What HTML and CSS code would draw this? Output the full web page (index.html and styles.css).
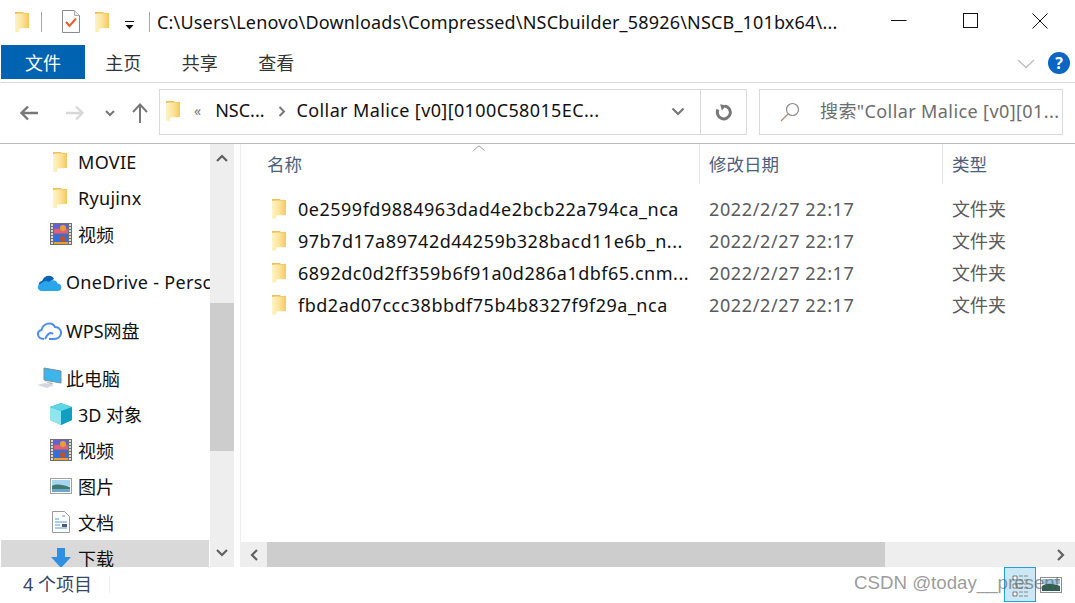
FILE: index.html
```html
<!DOCTYPE html>
<html lang="zh-CN">
<head>
<meta charset="utf-8">
<title>Explorer</title>
<link rel="stylesheet" href="styles.css">
</head>
<body>
<svg class="defs" width="0" height="0">
  <defs>
    <linearGradient id="fg" x1="0" x2="1" y1="0" y2="0"><stop offset="0" stop-color="#fff3c4"/><stop offset=".55" stop-color="#fbe29a"/><stop offset="1" stop-color="#f2c95e"/></linearGradient>
    <symbol id="folder" viewBox="0 0 14 20">
      <path d="M0 0h8l1 1h5v15H0z" fill="#eec25a"/>
      <path d="M0 2L4 1.500h10V16L4 16.500V20L.8 20 0 19z" fill="url(#fg)"/>
    </symbol>
    <symbol id="film" viewBox="0 0 22 22">
      <rect width="22" height="22" fill="#6e6e6e"/>
      <rect x="4" y="1" width="14" height="9.500" fill="#6a5fd0"/><rect x="4" y="6" width="14" height="4.500" fill="#e0607a"/><circle cx="13" cy="5" r="3" fill="#e8a030"/>
      <rect x="4" y="11.500" width="14" height="9.500" fill="#2f6fe0"/><circle cx="13" cy="16" r="3" fill="#c05030"/><rect x="4" y="19" width="14" height="2" fill="#e8a030"/>
      <path d="M1 2h2M1 5h2M1 8h2M1 11h2M1 14h2M1 17h2M1 20h2M19 2h2M19 5h2M19 8h2M19 11h2M19 14h2M19 17h2M19 20h2" stroke="#fff" stroke-width="1.500"/>
    </symbol>
  </defs>
</svg>
<div class="window">
  <header class="titlebar">
    <svg class="ico t-folder1" width="14" height="20"><use href="#folder"/></svg>
    <span class="t-sep t-sep1"></span>
    <svg class="t-doc" width="18" height="23" viewBox="0 0 18 23"><path d="M.5.500h12l5 5v17H.5z" fill="#fff" stroke="#8a8a8a"/><path d="M12.500.500v5h5" fill="#eee" stroke="#aaa"/><path d="M4 12l3.500 4L14 8.500" fill="none" stroke="#e8622c" stroke-width="2"/></svg>
    <svg class="ico t-folder2" width="14" height="20"><use href="#folder"/></svg>
    <svg class="t-drop" width="9" height="10" viewBox="0 0 9 10"><path d="M0 .500h9" stroke="#111" stroke-width="1"/><path d="M.500 4h8L4.500 8.500z" fill="#111"/></svg>
    <span class="t-sep t-sep2"></span>
    <span class="t-path">C:\Users\Lenovo\Downloads\Compressed\NSCbuilder_58926\NSCB_101bx64\...</span>
    <div class="winctl">
      <svg width="16" height="16" viewBox="0 0 16 16"><path d="M0 7.500h15.500" stroke="#111"/></svg>
      <svg width="16" height="16" viewBox="0 0 16 16"><rect x="1.500" y=".5" width="14" height="14" fill="none" stroke="#111"/></svg>
      <svg width="16" height="16" viewBox="0 0 16 16"><path d="M.500 .500l15 15M15.500 .500l-15 15" stroke="#111" fill="none"/></svg>
    </div>
  </header>

  <nav class="ribbon">
    <span class="tab tab-active">文件</span>
    <span class="tab">主页</span>
    <span class="tab">共享</span>
    <span class="tab">查看</span>
    <svg class="r-chev" width="18" height="10" viewBox="0 0 18 10"><path d="M1 1l8 7.500L17 1" fill="none" stroke="#bdbdbd" stroke-width="1.300"/></svg>
    <span class="help">?</span>
  </nav>

  <div class="addr">
    <svg class="a-back" width="20" height="16" viewBox="0 0 20 16"><path d="M19 8H3M9 1.500L2.500 8 9 14.500" fill="none" stroke="#777" stroke-width="2.400"/></svg>
    <svg class="a-fwd" width="20" height="16" viewBox="0 0 20 16"><path d="M1 8h16M11 1.500L17.500 8 11 14.500" fill="none" stroke="#d8d8d8" stroke-width="2.400"/></svg>
    <svg class="a-down" width="10" height="7" viewBox="0 0 10 7"><path d="M1 1l4 4 4-4" fill="none" stroke="#777" stroke-width="2"/></svg>
    <svg class="a-up" width="16" height="20" viewBox="0 0 16 20"><path d="M8 20V2M1 9l7-7.500L15 9" fill="none" stroke="#777" stroke-width="2"/></svg>
    <div class="crumb">
      <svg class="c-folder" width="14" height="20"><use href="#folder"/></svg>
      <span class="c-dbl">«</span>
      <span class="c-a">NSC...</span>
      <svg class="c-arrow" width="8" height="11" viewBox="0 0 8 11"><path d="M1.500 1l4.500 4.500L1.500 10" fill="none" stroke="#777" stroke-width="2"/></svg>
      <span class="c-b">Collar Malice [v0][0100C58015EC...</span>
      <svg class="c-drop" width="14" height="9" viewBox="0 0 14 9"><path d="M1.500 1.500L7 7l5.500-5.500" fill="none" stroke="#777" stroke-width="2.200"/></svg>
      <span class="c-refresh">
        <svg width="18" height="18" viewBox="0 0 18 18"><path d="M10 3A6.500 6.500 0 1 1 3 6.500" fill="none" stroke="#777" stroke-width="3"/><path d="M6 .500v6.500l5.500-3.500z" fill="#777" transform="rotate(-15 8 4)"/></svg>
      </span>
    </div>
    <div class="search">
      <svg class="s-ico" width="20" height="20" viewBox="0 0 20 20"><circle cx="12.500" cy="7.500" r="6" fill="none" stroke="#8a8a8a" stroke-width="1.200"/><path d="M8 12l-7 7" stroke="#b08a6a" stroke-width="1.300"/></svg>
      <span class="s-text">搜索"Collar Malice [v0][01...</span>
    </div>
  </div>

  <main class="main">
    <aside class="side">
      <ul class="tree">
        <li class="row lv2"><svg class="ti-f" width="14" height="20"><use href="#folder"/></svg><span class="lat">MOVIE</span></li>
        <li class="row lv2"><svg class="ti-f" width="14" height="20"><use href="#folder"/></svg><span class="lat">Ryujinx</span></li>
        <li class="row lv2"><svg class="ti" width="22" height="22"><use href="#film"/></svg><span class="cj">视频</span></li>
        <li class="row lv1 gap"><svg class="ti1" width="25" height="17" viewBox="0 0 25 17"><path d="M6 14C1 14 0 8 5 7 7 1 15 0 17 5l-6 4z" fill="#0a64b8"/><path d="M5 17C0 17-1 11 4 9.500 7 7 9 6 12 8c3-3 8-2 8.500 1.500 5 0 5.500 7.500 0 7.500z" fill="#29a6ea"/></svg><span class="lat">OneDrive - Persc</span></li>
        <li class="row lv1 gap"><svg class="ti1" width="25" height="19" viewBox="0 0 25 19"><path d="M7 18C0 18-1 10 4.500 9 6 2 15 0 18 6c5 0 7 5 5.500 8-1 3-4 4-7 4H12M8 18c2-4 5-8 8-5" fill="none" stroke="#4c8df0" stroke-width="2"/></svg><span class="cj">WPS网盘</span></li>
        <li class="row lv1 gap"><svg class="ti1" width="25" height="22" viewBox="0 0 25 22"><path d="M7 1l17 3v12L7 13z" fill="#3cb4ec" stroke="#7d8d9a"/><path d="M7 14l9 2-1 2z" fill="#bbb"/><path d="M0 18l8-2 9 2-7 3z" fill="#d4d8dc"/></svg><span class="cj">此电脑</span></li>
        <li class="row lv2"><svg class="ti" width="22" height="22" viewBox="0 0 22 22"><path d="M11 0l11 4v13l-11 5-11-5V4z" fill="#27b5c9"/><path d="M0 4l11 4v14L0 17z" fill="#8fe6ee"/><path d="M22 4L11 8v14l11-5z" fill="#0f9fc0"/><path d="M11 0l11 4-11 4L0 4z" fill="#5fd4e4"/></svg><span class="cj">3D 对象</span></li>
        <li class="row lv2"><svg class="ti" width="22" height="22"><use href="#film"/></svg><span class="cj">视频</span></li>
        <li class="row lv2"><svg class="ti" width="22" height="16" viewBox="0 0 22 16"><rect x=".5" y=".5" width="21" height="15" fill="#fff" stroke="#a0a0a0"/><rect x="2" y="2" width="18" height="6" fill="#a9d4f0"/><path d="M2 8c5-3 10-1 18 1v5H2z" fill="#3f7a70"/><rect x="2" y="11" width="18" height="3" fill="#6fa6cf"/></svg><span class="cj">图片</span></li>
        <li class="row lv2"><svg class="ti" width="22" height="22" viewBox="0 0 22 22"><path d="M2.500.5h12l5 5v16h-17z" fill="#fff" stroke="#9a9a9a"/><path d="M5 8h4M5 11h12M5 14h5M5 17h12M12 5h3" stroke="#4d9ad4"/><rect x="12" y="13" width="5" height="3" fill="#557"/></svg><span class="cj">文档</span></li>
        <li class="row lv2 sel"><svg class="ti" width="20" height="20" viewBox="0 0 20 20"><path d="M6 0h8v9h6L10 20 0 9h6z" fill="#2f8fe0"/></svg><span class="cj">下载</span></li>
      </ul>
      <div class="vbar">
        <svg class="sb-a" width="12" height="8" viewBox="0 0 12 8"><path d="M1 7l5-5 5 5" fill="none" stroke="#606060" stroke-width="2.200"/></svg>
        <div class="vtrack"><div class="vthumb"></div></div>
        <svg class="sb-a" width="12" height="8" viewBox="0 0 12 8"><path d="M1 1l5 5 5-5" fill="none" stroke="#606060" stroke-width="2.200"/></svg>
      </div>
    </aside>
    <section class="pane">
      <div class="heads">
        <div class="h h1"><span class="cj">名称</span><svg class="sort" width="12" height="6" viewBox="0 0 12 6"><path d="M.5 5.500L6 .8l5.500 4.700" fill="none" stroke="#9a9a9a"/></svg></div>
        <div class="h h2"><span class="cj">修改日期</span></div>
        <div class="h h3"><span class="cj">类型</span></div>
      </div>
      <ul class="files">
        <li class="file"><svg class="ff" width="14" height="20"><use href="#folder"/></svg><span class="fname">0e2599fd9884963dad4e2bcb22a794ca_nca</span><span class="fdate">2022/2/27 22:17</span><span class="ftype cj">文件夹</span></li>
        <li class="file"><svg class="ff" width="14" height="20"><use href="#folder"/></svg><span class="fname">97b7d17a89742d44259b328bacd11e6b_n...</span><span class="fdate">2022/2/27 22:17</span><span class="ftype cj">文件夹</span></li>
        <li class="file"><svg class="ff" width="14" height="20"><use href="#folder"/></svg><span class="fname">6892dc0d2ff359b6f91a0d286a1dbf65.cnm...</span><span class="fdate">2022/2/27 22:17</span><span class="ftype cj">文件夹</span></li>
        <li class="file"><svg class="ff" width="14" height="20"><use href="#folder"/></svg><span class="fname">fbd2ad07ccc38bbdf75b4b8327f9f29a_nca</span><span class="fdate">2022/2/27 22:17</span><span class="ftype cj">文件夹</span></li>
      </ul>
      <div class="hbar">
        <svg class="hb-a" width="8" height="12" viewBox="0 0 8 12"><path d="M7 1L2 6l5 5" fill="none" stroke="#606060" stroke-width="2.200"/></svg>
        <div class="htrack"><div class="hthumb"></div></div>
        <svg class="hb-a" width="8" height="12" viewBox="0 0 8 12"><path d="M1 1l5 5-5 5" fill="none" stroke="#606060" stroke-width="2.200"/></svg>
      </div>
    </section>
  </main>

  <footer class="status">
    <span class="count">4 个项目</span>
    <span class="st-sep"></span>
    <span class="viewbtn on"><svg width="20" height="30" viewBox="0 0 20 30"><path d="M3 6h4v4H3zM3 14h4v4H3zM3 22h4v4H3z" fill="#fff" stroke="#777"/><path d="M9 6h9M9 10h9M9 14h9M9 18h9M9 22h9M9 26h9" stroke="#888" stroke-dasharray="4 1"/></svg></span>
    <span class="viewbtn"><svg width="22" height="16" viewBox="0 0 22 16"><rect x=".5" y=".5" width="21" height="15" fill="#fff" stroke="#909090"/><rect x="2" y="2" width="18" height="5" fill="#9cc8e8"/><path d="M2 14V9c4-3 10-3 18 0v5z" fill="#2f5f50"/></svg></span>
  </footer>
  <div class="mark">CSDN @today__present</div>
</div>
</body>
</html>
```

FILE: styles.css
```css
* { box-sizing: border-box; }
html, body { margin: 0; padding: 0; background: #fff; }
body { width: 1075px; height: 603px; overflow: hidden; font-family: "Noto Sans", "Noto Sans CJK SC", sans-serif; font-size: 18px; color: #111; }
ul { list-style: none; margin: 0; padding: 0; }
svg { display: block; flex: none; }
.defs { position: absolute; }
.window { position: relative; width: 1075px; height: 603px; display: flex; flex-direction: column; }
.cj { padding-bottom: 2px; }
.row .cj { padding-bottom: 1px; }
.lat { letter-spacing: .3px; }

.titlebar { height: 41px; padding-top: 4px; display: flex; align-items: center; flex: none; }
.t-folder1 { margin-left: 15px; margin-top: -2px; }
.t-sep { width: 1px; height: 20px; margin-top: -2px; background: #a8a8a8; }
.t-sep1 { margin-left: 12px; }
.t-doc { margin-left: 20px; margin-top: -2px; }
.t-folder2 { margin-left: 15px; margin-top: -2px; }
.t-drop { margin-left: 16px; margin-top: 6px; }
.t-sep2 { margin-left: 15px; }
.t-path { margin-left: 7px; white-space: nowrap; font-size: 18px; letter-spacing: .18px; margin-top: -2px; }
.winctl { margin-left: auto; display: flex; gap: 54px; padding-right: 27px; margin-top: -3px; }
.winctl svg:first-child { margin-right: 1px; }

.ribbon { height: 42px; flex: none; display: flex; align-items: flex-start; margin-left: 1px; padding-top: 4px; border-bottom: 1px solid #d9d9d9; position: relative; }
.tab { width: 76.500px; height: 34px; display: flex; align-items: center; justify-content: center; color: #333; font-size: 18px; }
.tab-active { width: 84px; background: #0063b1; color: #fff; }
.r-chev { margin-left: auto; margin-top: 14px; }
.help { width: 22px; height: 22px; margin: 7px 5px 0 13px; border-radius: 50%; background: #0a66c2; color: #fff; font-weight: 700; font-size: 16px; line-height: 22px; text-align: center; }

.addr { height: 61px; flex: none; display: flex; align-items: center; border-bottom: 1px solid #bcbcbc; padding-bottom: 3px; }
.a-back { margin-left: 19px; margin-top: 2px; }
.a-fwd { margin-left: 26px; margin-top: 2px; }
.a-down { margin-left: 20px; margin-top: 3px; }
.a-up { margin-left: 17px; margin-right: 11px; margin-top: 2px; }
.crumb { width: 588px; height: 46px; border: 1px solid #d9d9d9; display: flex; align-items: center; }
.c-folder { margin-left: 6px; margin-top: -1px; }
.c-dbl { margin-left: 14px; color: #777; font-size: 14px; padding-bottom: 3px; }
.c-a { margin-left: 14px; white-space: nowrap; padding-bottom: 4px; }
.c-arrow { margin-left: 13px; }
.c-b { margin-left: 11px; white-space: nowrap; width: 360px; letter-spacing: .38px; padding-bottom: 4px; }
.c-drop { margin-left: auto; }
.c-refresh { width: 46px; height: 100%; margin-left: 15px; border-left: 1px solid #d9d9d9; display: flex; align-items: center; justify-content: center; }
.search { width: 304px; height: 46px; margin-left: 12px; border: 1px solid #d9d9d9; display: flex; align-items: center; color: #6d6d6d; }
.s-ico { margin-left: 20px; }
.s-text { margin-left: 20px; white-space: nowrap; letter-spacing: .4px; padding-bottom: 4px; }

.main { flex: none; height: 423px; display: flex; overflow: hidden; }
.side { width: 240px; flex: none; display: flex; overflow: hidden; }
.tree { width: 210px; flex: none; overflow: hidden; }
.row { height: 36px; display: flex; align-items: center; white-space: nowrap; overflow: hidden; }
.row.gap { margin-top: 12px; }
.lv2 { padding-left: 50px; }
.lv1 { padding-left: 37px; }
.ti-f { margin-left: 3px; margin-right: 11px; }
.ti { margin-right: 6px; width: 22px; }
.ti1 { margin-right: 4px; }
.sel { background: #d9d9d9; margin-left: 1px; padding-left: 49px; height: 36px; margin-right: 1px; }
.vbar { width: 24px; flex: none; background: #eee; display: flex; flex-direction: column; align-items: center; padding: 10px 0; }
.vtrack { flex: 1; align-self: stretch; padding-top: 141px; }
.vthumb { height: 148px; background: #cdcdcd; }
.sb-a { flex: none; }

.pane { flex: 1; min-width: 0; display: flex; flex-direction: column; border-left: 1px solid #eee; }
.heads { height: 40px; flex: none; display: flex; color: #4c607a; font-size: 17.500px; }
.h { height: 40px; display: flex; align-items: center; position: relative; border-right: 1px solid #e5e5e5; padding-left: 9px; }
.h1 { width: 459px; padding-left: 26px; }
.h2 { width: 243px; }
.h3 { border-right: 0; flex: 1; }
.sort { position: absolute; left: 232px; top: 1px; }
.files { flex: 1; padding-top: 9px; }
.file { height: 32px; display: flex; align-items: center; white-space: nowrap; }
.ff { margin-left: 31px; }
.fname { width: 411px; margin-left: 12px; letter-spacing: .5px; }
.fdate { width: 243px; color: #5a5a5a; letter-spacing: .62px; }
.ftype { color: #5a5a5a; }
.hbar { height: 25px; flex: none; background: #eee; display: flex; align-items: center; padding: 0 10px 0 9px; }
.htrack { flex: 1; align-self: stretch; padding-left: 9px; padding-right: 172px; }
.hthumb { height: 100%; background: #cdcdcd; }

.status { height: 37px; flex: none; display: flex; align-items: flex-start; padding-left: 23px; color: #33475f; }
.count { width: 86px; white-space: nowrap; margin-top: 3px; }
.st-sep { width: 1px; height: 17px; margin-top: 9px; background: #eee; }
.viewbtn { display: flex; align-items: center; justify-content: center; height: 35px; width: 30px; }
.viewbtn.on { width: 32px; margin-left: auto; background: #cbe8f6; border: 1px solid #26a0da; }
.viewbtn:last-child { margin-right: 9px; }
.mark { position: absolute; left: 854px; top: 572px; font-family: "Liberation Sans", sans-serif; font-size: 18.700px; color: rgba(90,90,90,.62); white-space: nowrap; }
```
